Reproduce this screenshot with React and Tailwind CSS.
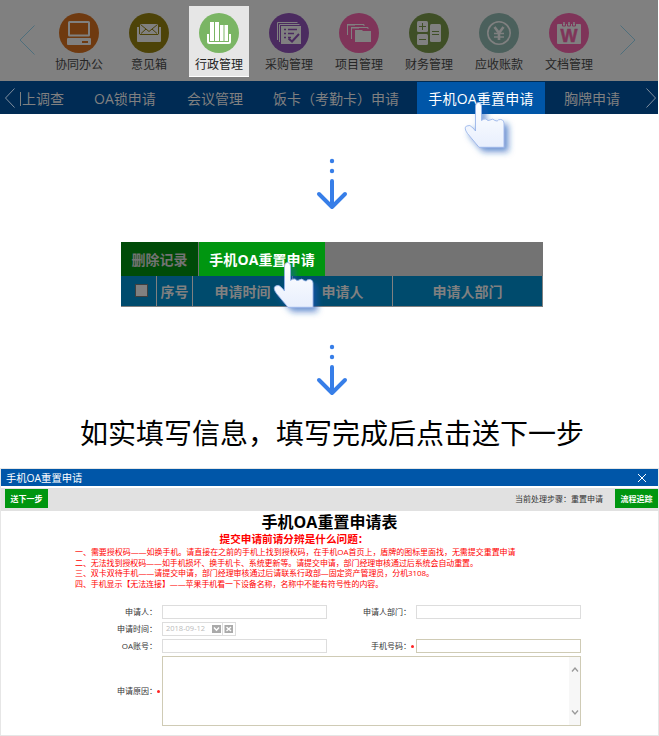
import React from "react";

const SANS = "font-['Open_Sans','Noto_Sans_CJK_SC',sans-serif]";

function ComputerIcon() {
  return (
    <g>
      <rect x="10" y="9" width="20" height="13.5" rx="0.5" fill="none" stroke="#808080" strokeWidth="2" />
      <path d="M9 25h22q1 0 1 1v5q0 1-1 1H9q-1 0-1-1v-5q0-1 1-1z" fill="#808080" />
      <rect x="23" y="28" width="6" height="2" fill="#6f3a10" />
    </g>
  );
}

function MailIcon() {
  return (
    <g>
      <path d="M8 14h2v7l2 1h16l2-1v-7h2v14q0 1-1 1H9q-1 0-1-1z" fill="#808080" />
      <path d="M11 11h18v10H11z" fill="#808080" />
      <path d="M11.500 11.500l8.500 7 8.500-7M12 20.500l5-4.500M28 20.500l-5-4.500M11 21.500h18" fill="none" stroke="#4d4308" strokeWidth="1" />
    </g>
  );
}

function BooksIcon() {
  return (
    <g fill="#fff">
      <path d="M11 9h4v19h-4zM16 9h4v19h-4zM21 12h3.500v16H21zM25.500 12H29v16h-3.500z" />
      <path d="M9 21v7.500q0 1.500 1.500 1.500h19q1.500 0 1.500-1.500V21" fill="none" stroke="#fff" strokeWidth="2" />
    </g>
  );
}

function ChecklistIcon() {
  return (
    <g>
      <path d="M8.500 27V9.500h20" fill="none" stroke="#808080" />
      <path d="M10.500 29V11.500h20" fill="none" stroke="#808080" />
      <rect x="12" y="13" width="20" height="18" fill="#808080" />
      <path d="M15 16.500h2M15 20.500h2M15 24.500h2M19 16.500h9M19 20.500h6M19 24.500h3" stroke="#4b2b60" strokeWidth="1.600" />
      <path d="M19.500 25.500l3.500 3 7-7.500" fill="none" stroke="#4b2b60" strokeWidth="2" />
    </g>
  );
}

function FoldersIcon() {
  return (
    <g>
      <path d="M8.500 22V11.500H25V13" fill="none" stroke="#808080" />
      <path d="M8 11h8v1.500H8zM12 14h8v1.500h-8z" fill="#808080" />
      <path d="M12.500 26V14.500H29V16" fill="none" stroke="#808080" />
      <path d="M16 17h7l1 1h8v11H16z" fill="#808080" />
    </g>
  );
}

function CalculatorIcon() {
  return (
    <g>
      <rect x="8" y="8" width="11" height="11" rx="1.500" fill="#808080" />
      <rect x="8" y="21" width="11" height="11" rx="1.500" fill="#808080" />
      <rect x="21" y="11" width="11" height="18" rx="1.500" fill="#808080" />
      <path d="M10 13.500h7M13.500 10v7M10 26.500h7M23 18.500h7M23 21.500h7" stroke="#3f4f26" />
    </g>
  );
}

function YenIcon() {
  return (
    <g fill="none" stroke="#808080">
      <circle cx="20" cy="20" r="11.200" strokeWidth="1.600" />
      <path d="M15.500 14l4.500 6 4.500-6M20 19v8" strokeWidth="2.600" />
      <path d="M15 20.500h10M15 24h10" strokeWidth="1.600" />
    </g>
  );
}

function WordIcon() {
  return (
    <g>
      <rect x="8" y="11" width="24" height="20" rx="1" fill="#808080" />
      <path d="M13.500 11v2h3v-2M18.500 11v2h3v-2M23.500 11v2h3v-2" fill="none" stroke="#7f3459" strokeWidth="1" />
      <path d="M15 9v3M20 9v3M25 9v3" stroke="#808080" strokeWidth="1.500" />
      <text
        x="20"
        y="28.500"
        textAnchor="middle"
        fill="#7f3459"
        stroke="#7f3459"
        strokeWidth="0.500"
        className="font-['Liberation_Sans',sans-serif] text-[18px] font-bold"
      >
        W
      </text>
    </g>
  );
}

const modules = [
  { label: "协同办公", color: "#6f3a10", Icon: ComputerIcon },
  { label: "意见箱", color: "#4d4308", Icon: MailIcon },
  { label: "行政管理", color: "#7ab564", Icon: BooksIcon, active: true },
  { label: "采购管理", color: "#4b2b60", Icon: ChecklistIcon },
  { label: "项目管理", color: "#7f3459", Icon: FoldersIcon },
  { label: "财务管理", color: "#3f4f26", Icon: CalculatorIcon },
  { label: "应收账款", color: "#4b605c", Icon: YenIcon },
  { label: "文档管理", color: "#7f3459", Icon: WordIcon },
];

function Module({ label, color, Icon, active }) {
  return (
    <div className={`mt-1.5 flex h-[71px] w-[60px] flex-col items-center pt-[7px] ${active ? "border-b border-white bg-[#e6e6e6]" : ""}`}>
      <svg width="40" height="40" viewBox="0 0 40 40" className="block shrink-0">
        <circle cx="20" cy="20" r="20" fill={color} />
        <Icon />
      </svg>
      <span className={`mt-1 whitespace-nowrap text-xs leading-4 ${active ? "text-[#222]" : "text-[#262626]"}`}>{label}</span>
    </div>
  );
}

function Chevron({ w, h, d, color, className }) {
  return (
    <svg width={w} height={h} viewBox={`0 0 ${w} ${h}`} className={`block shrink-0 ${className}`}>
      <path d={d} fill="none" stroke={color} strokeWidth="1" />
    </svg>
  );
}

function Hand({ className }) {
  return (
    <svg width="64" height="68" viewBox="0 0 64 68" className={`absolute ${className}`}>
      <defs>
        <linearGradient id="hand" x1="0" y1="0" x2="0" y2="1">
          <stop offset="0" stopColor="#fff" />
          <stop offset="1" stopColor="#e8effd" />
        </linearGradient>
        <filter id="handShadow" x="-30%" y="-30%" width="180%" height="180%">
          <feDropShadow dx="4" dy="4" stdDeviation="3" floodColor="#1f57b8" floodOpacity="0.65" />
        </filter>
      </defs>
      <path
        d="M15.500 11Q15.500 7.500 18.500 7.500Q21.500 7.500 21.500 11V25.500Q23.500 23.500 26 24Q28 26.500 30 25Q33 23 35 25.500Q37.500 27 38.500 24.800Q43.500 23.500 44 28V52.300H19L7.500 38.500Q3.500 33 6.500 31Q10 29 13 33L15.500 36Z"
        fill="url(#hand)"
        stroke="#8fafe9"
        strokeWidth="0.800"
        filter="url(#handShadow)"
      />
    </svg>
  );
}

function DownArrow({ className }) {
  return (
    <svg width="34" height="54" viewBox="0 0 34 54" className={`block ${className}`}>
      <circle cx="17" cy="4" r="2.200" fill="#377ee8" />
      <circle cx="17" cy="14" r="2.200" fill="#377ee8" />
      <path d="M17 24v26M4 37l13 13 13-13" fill="none" stroke="#377ee8" strokeWidth="4" strokeLinecap="round" strokeLinejoin="round" />
    </svg>
  );
}

function Label({ children, required }) {
  return (
    <div className="flex items-center justify-end whitespace-nowrap text-[8px] text-[#333]">
      <span>{children}</span>
      <span className="flex w-[5px] justify-start">
        {required && <i className="block size-[3px] rounded-full bg-[#f22]" />}
      </span>
    </div>
  );
}

const notes = [
  { text: "一、需要授权码——如换手机。请直接在之前的手机上找到授权码，在手机OA首页上，盾牌的图标里面找，无需提交重置申请", spacing: "tracking-[-0.050px]" },
  { text: "二、无法找到授权码——如手机损坏、换手机卡、系统更新等。请提交申请，部门经理审核通过后系统会自动重置。", spacing: "tracking-[-0.100px]" },
  { text: "三、双卡双待手机——请提交申请，部门经理审核通过后请联系行政部—固定资产管理员，分机3108。", spacing: "tracking-[-0.070px]" },
  { text: "四、手机显示【无法连接】——苹果手机看一下设备名称，名称中不能有符号性的内容。", spacing: "tracking-[-0.100px]" },
];

function TopMenu() {
  return (
    <div className="relative w-[658px]">
      <div className="flex h-[81px] bg-[#808080]">
        <Chevron w={16} h={30} d="M15.500.5L1 15l14.500 14.500" color="#4f6f7c" className="ml-[19px] mr-3.5 mt-[25px]" />
        <div className="flex gap-2.5">
          {modules.map((m) => <Module key={m.label} {...m} />)}
        </div>
        <Chevron w={16} h={30} d="M.5.5L15 15 .5 29.500" color="#4f6f7c" className="ml-[21px] mt-[25px]" />
      </div>
      <div className="flex h-[33px] items-center whitespace-nowrap bg-[#002b54] text-sm text-[#808080]">
        <Chevron w={10} h={20} d="M9.500.5L.5 10l9 9.500" color="#808f9f" className="ml-[5px]" />
        <span className="ml-[5px] mt-0.5 h-3.5 w-px bg-[#808080]" />
        <span className="ml-px w-11 pt-0.5">上调查</span>
        <span className="ml-[28px] w-[66px] pt-0.5">OA锁申请</span>
        <span className="ml-[27px] w-14 pt-0.5">会议管理</span>
        <span className="ml-[30px] w-[126px] pt-0.5">饭卡（考勤卡）申请</span>
        <span className="ml-[18px] flex h-8 w-32 items-center justify-center self-end bg-[#0056a8] pt-px tracking-[0.200px] text-white">手机OA重置申请</span>
        <span className="ml-[19px] w-14 pt-0.5">胸牌申请</span>
        <Chevron w={10} h={20} d="M.5.5l9 9.500-9 9.500" color="#808f9f" className="ml-[26px]" />
      </div>
      <Hand className="left-[460px] top-[95px]" />
    </div>
  );
}

function RecordTable() {
  const cell = "flex items-center justify-center border-r border-[#808080] pt-px";
  return (
    <div className="relative ml-[121px] w-[422px] text-sm font-bold">
      <div className="flex h-[34px] bg-[#737373]">
        <div className="flex w-[78px] items-center justify-center border-r border-[#737373] bg-[#004b08] pt-px text-[#737373]">删除记录</div>
        <div className="flex w-[126px] items-center justify-center whitespace-nowrap bg-[#009610] pt-px text-white">
          <span className="tracking-[0.100px]">手机OA重置申请</span>
        </div>
      </div>
      <div className="flex h-[31px] border-b border-[#808080] bg-[#004b6d] text-[#808080]">
        <div className={`w-9 pb-[3px] pl-[5px] ${cell}`}><i className="block size-[13px] border border-[#404040] bg-[#808080]" /></div>
        <div className={`w-9 ${cell}`}>序号</div>
        <div className={`w-[100px] ${cell}`}>申请时间</div>
        <div className={`w-[100px] ${cell}`}>申请人</div>
        <div className={`w-[150px] ${cell}`}>申请人部门</div>
      </div>
      <Hand className="left-[147.500px] top-[12.500px]" />
    </div>
  );
}

function FormWindow() {
  return (
    <div className="h-[268px] w-[659px] border border-[#e6e6e6] bg-white">
      <div className="flex h-[17px] items-center justify-between bg-[#0056a8] pl-[5px] pr-3 text-white">
        <span className="pt-0.5 text-[10.300px] leading-[17px]">手机OA重置申请</span>
        <svg width="8" height="8" viewBox="0 0 8 8"><path d="M0 0l8 8M8 0L0 8" stroke="#fff" /></svg>
      </div>
      <div className="mt-0.5 flex h-[23px] items-start bg-[#e1e1e1] pt-px text-[8px]">
        <div className="ml-1 flex h-[19px] w-[43px] items-center justify-center bg-[#009610] font-bold text-white">送下一步</div>
        <span className="ml-auto mr-3 leading-5 text-[#333]">当前处理步骤：重置申请</span>
        <div className="flex h-[19px] w-[43px] items-center justify-center bg-[#009610] font-bold text-white">流程追踪</div>
      </div>
      <div className="text-center font-bold">
        <div className="h-[22px] text-base leading-[22px] text-black">手机OA重置申请表</div>
        <div className="h-3 pr-[71px] text-[10.650px] leading-[13px] text-[#f00]">提交申请前请分辨是什么问题：</div>
      </div>
      <div className="ml-[74px] mt-0.5 whitespace-nowrap text-[8px] leading-[10.500px] text-[#f00]">
        {notes.map((n) => <div key={n.text} className={n.spacing}>{n.text}</div>)}
      </div>
      <div className="mt-4 grid grid-cols-[161px_165px_89px_165px] gap-y-[3px]">
        <Label>申请人：</Label>
        <div className="h-3.5 border border-[#ddd]" />
        <Label>申请人部门：</Label>
        <div className="h-3.5 border border-[#ddd]" />
        <Label>申请时间：</Label>
        <div className="col-span-3 flex h-3.5 w-[74px] items-center border border-[#ddd] pl-[3px] text-[7.500px] text-[#bbb]">
          <span className="w-[46px]">2018-09-12</span>
          <svg width="22" height="12" viewBox="0 0 22 12" className="block shrink-0">
            <path d="M0 2h9v8H0zM12.500 2h8.500v8h-8.500z" fill="#aaa" />
            <path d="M10.500 0v12" stroke="#ddd" />
            <path d="M2 4.500l2.500 2.700L7 4.500M14.500 4l4.500 4M19 4l-4.500 4" fill="none" stroke="#fff" strokeWidth="1.400" />
          </svg>
        </div>
        <Label>OA账号：</Label>
        <div className="h-3.5 border border-[#ddd]" />
        <Label required>手机号码：</Label>
        <div className="h-3.5 border border-[#cfcbb5]" />
        <Label required>申请原因：</Label>
        <div className="col-span-3 flex h-[70px] justify-end border border-[#cfcbb5]">
          <div className="flex w-[11px] flex-col items-center justify-between bg-[#f7f7f7] py-[10px]">
            <svg width="8" height="5" viewBox="0 0 8 5"><path d="M1 4.500l3-3.500 3 3.500" fill="none" stroke="#999" strokeWidth="1.300" /></svg>
            <svg width="8" height="5" viewBox="0 0 8 5"><path d="M1 .5L4 4 7 .5" fill="none" stroke="#999" strokeWidth="1.300" /></svg>
          </div>
        </div>
      </div>
    </div>
  );
}

export default function App() {
  return (
    <div className={`flex h-[736px] w-[659px] flex-col overflow-hidden bg-white ${SANS}`}>
      <TopMenu />
      <DownArrow className="ml-[315px] mt-[43px]" />
      <div className="mt-[31px]"><RecordTable /></div>
      <DownArrow className="ml-[315px] mt-9" />
      <h1 className="ml-20 mt-4 h-[55px] whitespace-nowrap text-[28px] font-normal leading-10 text-black">
        如实填写信息，填写完成后点击送下一步
      </h1>
      <FormWindow />
    </div>
  );
}
